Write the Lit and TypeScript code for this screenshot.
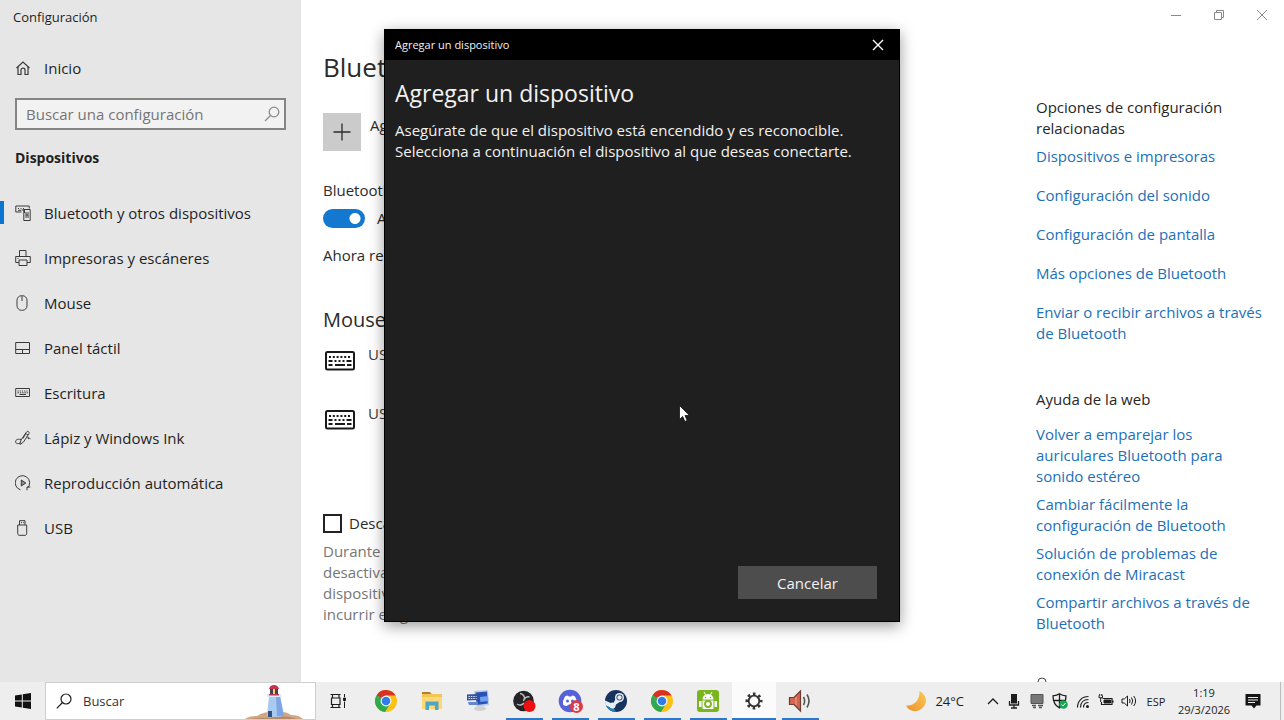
import { LitElement, html, css, svg, nothing } from "lit";
import { customElement } from "lit/decorators.js";
import { classMap } from "lit/directives/class-map.js";

const icon = (size: number, box: string, body: unknown) => html`<svg
  width=${size} height=${size} viewBox=${box} fill="none" stroke="currentColor" aria-hidden="true">${body}</svg>`;

const chrome = svg`<g stroke="none">
  <circle cx="12" cy="12" r="11" fill="#fbc116"/>
  <path d="M12 12 2.500 6.400A11 11 0 0 1 21.600 6.600H12Z" fill="#d93025"/>
  <path d="M2.500 6.400A11 11 0 0 0 11 23l5.300-8.600L12 12 7.500 14.700Z" fill="#2da94f"/>
  <path d="M2.500 6.400 7.300 14.600 9 9Z" fill="#2da94f"/>
  <circle cx="12" cy="12" r="5.400" fill="#fff"/><circle cx="12" cy="12" r="4.300" fill="#2f7de9"/></g>`;

const nav: { label: string; art: unknown; current?: boolean }[] = [
  {
    label: "Bluetooth y otros dispositivos", current: true,
    art: svg`<path d="M6.500 7H.8V1h13.400v2.500M3 3.500h1M5.500 3.500h1M8 3.500h1M3 5.300h3"/><path d="M6.500 5h3v3M8.800 4.500h6.400v11H8.800zM11 7v6M13 7v6M11 10h2"/>`,
  },
  {
    label: "Impresoras y escáneres",
    art: svg`<path d="M4.500 6.500v-6H11v6M4 12.500H.700v-6h14.600v6H12M4 10h8v5.500H4zM2.500 8.500h1"/>`,
  },
  { label: "Mouse", art: svg`<rect x="2" y=".7" width="10" height="14.600" rx="4.500"/><path d="M7 1v5"/>` },
  { label: "Panel táctil", art: svg`<path d="M.7 2.500h13.800v11H.7zM.7 9.500h13.800M7.500 9.500v4"/>` },
  {
    label: "Escritura",
    art: svg`<path d="M.7 3.500h13.800v8H.7z"/><path d="M2.500 6h10.500" stroke-dasharray="1.200 1"/><path d="M2.500 7.800h10.500" stroke-dasharray="1.500 .8"/><path d="M4.500 9.500h6.500"/>`,
  },
  {
    label: "Lápiz y Windows Ink",
    art: svg`<path d="M5 13.500 6 10l5.500-8c1-1.500 3.300-.2 2.500 1.500L8.500 12 5 14.500zM10.500 3.500l2.500 1.500M8 8.500 10.500 4M6 9.500c-4-1-6 1-5.300 2.800C1.300 14 3.500 14 5 13M11.500 7.500c2-1.200 3 .2 1.500 1.300 1-.5 2-.5 2.500 0"/>`,
  },
  {
    label: "Reproducción automática",
    art: svg`<path d="M5.500 14.800A7.200 7.200 0 1 1 12.500 13M15.300 12h-3.300v3.300"/><path d="M6.300 5v6l4.500-3z" fill="currentColor" fill-opacity=".5"/>`,
  },
  { label: "USB", art: svg`<path d="M4.500 5V.7h5.500V5M2.700 5h9v8.500c0 1-.5 1.800-1.500 1.800h-6c-1 0-1.500-.8-1.500-1.800zM6 2.700h1M8.200 2.700h1"/>` },
];

const related = [
  "Dispositivos e impresoras",
  "Configuración del sonido",
  "Configuración de pantalla",
  "Más opciones de Bluetooth",
  "Enviar o recibir archivos a través de Bluetooth",
];
const webHelp = [
  "Volver a emparejar los auriculares Bluetooth para sonido estéreo",
  "Cambiar fácilmente la configuración de Bluetooth",
  "Solución de problemas de conexión de Miracast",
  "Compartir archivos a través de Bluetooth",
];

@customElement("settings-sidebar")
export class SettingsSidebar extends LitElement {
  static styles = css`
    :host { display: block; background: #e6e6e6; color: #1f1f1f; }
    .title { font-size: 13px; line-height: 35px; padding-left: 13px; }
    a { color: inherit; text-decoration: none; display: flex; align-items: center; height: 45px; gap: 13px; padding-left: 15px; }
    .home { margin-top: 10px; }
    .search { display: flex; align-items: center; box-sizing: border-box; height: 32px; margin: 8px 15px 0; border: 2px solid #858585; background: #f2f2f2; padding: 0 4px 0 9px; color: #8a8a8a; }
    input { flex: 1; min-width: 0; border: 0; padding: 0; background: none; outline: 0; font: inherit; color: #333; }
    input::placeholder { color: #757575; opacity: 1; }
    h2 { margin: 18px 0 22px 15px; font-size: 14px; line-height: 20px; font-weight: 700; }
    .current { background: linear-gradient(#0b74d1, #0b74d1) 0 50% / 4px 23px no-repeat; }
    svg { flex: none; }
    a svg { color: #3a3a3a; }
  `;
  render() {
    return html`
      <div class="title">Configuración</div>
      <a class="home" href="#inicio">${icon(16, "0 0 16 16", svg`<path d="M1.500 8 8 2l6.500 6M3 7v7.500h3V10c0-2.500 4-2.500 4 0v4.500h3V7" stroke-width="1.200"/>`)}<span>Inicio</span></a>
      <label class="search">
        <input type="search" placeholder="Buscar una configuración" aria-label="Buscar una configuración" />
        ${icon(16, "0 0 16 16", svg`<circle cx="10" cy="6" r="4.800" stroke-width="1.300"/><path d="M6.500 9.500 1 15" stroke-width="1.300"/>`)}
      </label>
      <h2>Dispositivos</h2>
      <nav>${nav.map((n) => html`<a href="#" class=${classMap({ current: !!n.current })} aria-current=${n.current ? "page" : nothing}>${icon(16, "0 0 16 16", n.art)}<span>${n.label}</span></a>`)}</nav>
    `;
  }
}

@customElement("bluetooth-page")
export class BluetoothPage extends LitElement {
  static styles = css`
    :host { display: flex; flex-direction: column; background: #fff; color: #2b2b2b; min-width: 0; }
    .controls { display: flex; justify-content: flex-end; padding-right: 1px; }
    .controls button { width: 43px; height: 30px; border: 0; padding: 0; background: none; color: #8a8a8a; display: grid; place-items: center; }
    .columns { display: flex; justify-content: space-between; padding: 0 18px 0 22px; }
    .main { flex: 1; max-width: 580px; padding-top: 19px; }
    h1 { margin: 0; font-size: 26px; line-height: 36px; font-weight: 400; }
    .add { display: flex; align-items: flex-start; gap: 9px; margin-top: 28px; border: 0; padding: 0; background: none; font: inherit; color: inherit; line-height: 24px; }
    .tile { width: 38px; height: 38px; background: #cbcbcb; display: grid; place-items: center; }
    .label { margin: 29px 0 0; line-height: 20px; }
    .toggle { display: flex; align-items: center; gap: 12px; margin-top: 8px; line-height: 20px; }
    .toggle input { appearance: none; box-sizing: border-box; margin: 0; width: 42px; height: 19px; border-radius: 10px; background: radial-gradient(circle at 32px 50%, #fff 5px, transparent 6px) #1478d0; }
    .seen { margin: 17px 0 0; line-height: 20px; }
    h2 { margin: 41px 0 0; font-size: 20px; line-height: 28px; font-weight: 400; }
    ul { list-style: none; margin: 0; padding: 0; }
    .device { display: flex; gap: 13px; height: 49px; padding: 10px 0 0 2px; line-height: 20px; color: #3a3a3a; }
    .device svg { color: #1a1a1a; margin-top: 2px; }
    .metered { display: flex; align-items: center; gap: 7px; margin-top: 61px; line-height: 20px; }
    .metered input { appearance: none; box-sizing: border-box; margin: 0; width: 19px; height: 19px; border: 2px solid #222; background: #fff; }
    .hint { margin: 8px 0 0; line-height: 21px; color: #767676; }
    .side { width: 230px; padding-top: 67px; line-height: 21px; color: #262626; }
    h3 { margin: 0 0 7px; font-size: inherit; font-weight: 400; line-height: 21px; }
    .side li { margin-bottom: 18px; }
    .side .help li { margin-bottom: 7px; }
    .side .help-title { margin: 45px 0 14px; }
    .side a { color: #1d70b8; text-decoration: none; }
    .more { display: block; margin-top: 43px; height: 20px; color: #444; }
  `;
  private keyboard = html`<svg width="30" height="30" viewBox="0 0 30 30" fill="none" stroke="currentColor" aria-hidden="true"><rect x="1" y="6" width="28" height="17.500" rx="1.500" stroke-width="2"/><path d="M4 11h22.500" stroke-width="2" stroke-dasharray="2 1.800"/><path d="M3.500 15h4M9.500 15h2M13.500 15h2M17.500 15h2M21.500 15h5" stroke-width="2"/><path d="M3.500 19h4M10 19h10M22 19h4.500" stroke-width="2"/></svg>`;
  render() {
    return html`
      <div class="controls">
        <button aria-label="Minimizar">${icon(12, "0 0 12 12", svg`<path d="M1 6.500h10"/>`)}</button>
        <button aria-label="Restaurar">${icon(12, "0 0 12 12", svg`<path d="M1.500 3.500h7v7h-7zM3.500 3.500v-2h7v7h-2"/>`)}</button>
        <button aria-label="Cerrar">${icon(12, "0 0 12 12", svg`<path d="m1 1 10 10M11 1 1 11"/>`)}</button>
      </div>
      <div class="columns">
        <div class="main">
          <h1>Bluetooth y otros dispositivos</h1>
          <button class="add"><span class="tile">${icon(20, "0 0 20 20", svg`<path d="M10 1.500v17M1.500 10h17" stroke-width="1.300"/>`)}</span>Agregar Bluetooth u otro dispositivo</button>
          <p class="label">Bluetooth</p>
          <label class="toggle"><input type="checkbox" role="switch" checked />Activado</label>
          <p class="seen">Ahora reconocible</p>
          <h2>Mouse, teclado y lápiz</h2>
          <ul>
            <li class="device">${this.keyboard}USB Device</li>
            <li class="device">${this.keyboard}USB Device</li>
          </ul>
          <label class="metered"><input type="checkbox" />Descargar con conexiones de uso medido</label>
          <p class="hint">Durante conexiones de uso medido, mantén<br />desactivada esta opción para que los nuevos<br />dispositivos no descarguen software y evitar<br />incurrir en gastos adicionales.</p>
        </div>
        <aside class="side">
          <h3>Opciones de configuración relacionadas</h3>
          <ul>${related.map((t) => html`<li><a href="#">${t}</a></li>`)}</ul>
          <h3 class="help-title">Ayuda de la web</h3>
          <ul class="help">${webHelp.map((t) => html`<li><a href="#">${t}</a></li>`)}</ul>
          <span class="more">${icon(16, "0 0 16 16", svg`<circle cx="6" cy="5" r="4"/>`)}</span>
        </aside>
      </div>
    `;
  }
}

@customElement("add-device-dialog")
export class AddDeviceDialog extends LitElement {
  static styles = css`
    :host { display: flex; flex-direction: column; box-sizing: border-box; border: 1px solid #000; background: #1f1f1f; color: #f2f2f2; box-shadow: 0 4px 14px rgba(0, 0, 0, 0.4); }
    .bar { display: flex; align-items: center; justify-content: space-between; background: #000; height: 30px; padding-left: 10px; font-size: 11px; line-height: 16px; }
    .close { width: 43px; height: 30px; border: 0; padding: 0; background: none; color: #fff; display: grid; place-items: center; }
    .body { flex: 1; padding: 16px 22px 22px 10px; display: flex; flex-direction: column; }
    h1 { margin: 0; font-size: 23px; line-height: 34px; font-weight: 400; }
    p { margin: 10px 0 0; line-height: 21px; }
    .cancel { margin-top: auto; align-self: flex-end; width: 139px; height: 33px; border: 0; background: #4d4d4d; color: #f2f2f2; font: inherit; }
  `;
  render() {
    return html`
      <div class="bar"><span>Agregar un dispositivo</span><button class="close" aria-label="Cerrar">${icon(12, "0 0 12 12", svg`<path d="m1 1 10 10M11 1 1 11" stroke-width="1.400"/>`)}</button></div>
      <div class="body">
        <h1>Agregar un dispositivo</h1>
        <p>Asegúrate de que el dispositivo está encendido y es reconocible. Selecciona a continuación el dispositivo al que deseas conectarte.</p>
        <button class="cancel">Cancelar</button>
      </div>
    `;
  }
}

const apps: { name: string; art: unknown; open?: boolean; active?: boolean; badge?: string }[] = [
  { name: "Google Chrome", art: chrome },
  {
    name: "Explorador de archivos",
    art: svg`<g stroke="none"><path d="M2 3h8l2 2.500H2z" fill="#a98532"/><path d="M2 5h20v15H2z" fill="#fdd878"/><path d="M2 5h20v3H2z" fill="#f3c653"/><path d="M5.500 12.500h13V21H15v-4.500H9V21H5.500z" fill="#4fa6c4"/></g>`,
  },
  {
    name: "Teclado en pantalla",
    art: svg`<g stroke="none"><path d="m8 2 14-1 1 15-12 2z" fill="#bccbe8"/><path d="m9.500 3.500 11.500-1 .8 12-11 1.500z" fill="#2b50b5"/><path d="m14 8 8-1 .3 5-8 1z" fill="#6f9ff0"/><path d="M1 5.500 12 5v6l-11 .5z" fill="#31529c"/><path d="M2.500 7.500h8M2.500 9.500h8" stroke="#e6edfa" stroke-width="1.200" stroke-dasharray="1.400 1"/><path d="M2 13h10v3H3z" fill="#6287cf"/><ellipse cx="14" cy="19.500" rx="6" ry="2.600" fill="#d0d1d2"/></g>`,
  },
  {
    name: "OBS Studio", open: true,
    art: svg`<g stroke="none"><circle cx="11.500" cy="12" r="10.300" fill="#252326"/><path d="M8 4.500a5 5 0 0 1 4.500 6M17.500 8a5 5 0 0 0-6 4M5 15a5 5 0 0 0 7-1" stroke="#bcbcbc" stroke-width="1.500" fill="none"/><circle cx="17.500" cy="17" r="6" fill="#ed1010"/></g>`,
  },
  {
    name: "Discord", open: true, badge: "8",
    art: svg`<g stroke="none"><circle cx="12" cy="12" r="11.300" fill="#5762d8"/><path d="M7 7.500q2-1 3-1l.6 1h2.800l.6-1q1.500 0 3 1 2.500 4 2 8-2 1.500-3.500 1.500l-1-1.800h-3L8.500 17Q7 17 5 15.500q-.5-4 2-8" fill="#fff"/><circle cx="9.500" cy="12" r="1.500" fill="#5762d8"/><circle cx="14.500" cy="12" r="1.500" fill="#5762d8"/></g>`,
  },
  {
    name: "Steam", open: true,
    art: svg`<g stroke="none"><circle cx="12" cy="12" r="11" fill="#17345e"/><path d="M2 16.500Q8 15 12 23A11 11 0 0 1 2 16.500" fill="#2681b2"/><path d="m1 11.500 8 3.500L12 9l5 3-5 3.500-2.500 4-4-1.500-4.300-2z" fill="#e7eef5"/><circle cx="8.500" cy="16.500" r="3" fill="#e7eef5"/><circle cx="15.500" cy="8.500" r="4.500" fill="#e7eef5"/><circle cx="15.500" cy="8.500" r="3" fill="#17345e"/><circle cx="15.500" cy="8.500" r="2.200" fill="#e7eef5"/></g>`,
  },
  { name: "Google Chrome", open: true, art: chrome },
  {
    name: "Android", open: true,
    art: svg`<g stroke="none"><rect x="1" y="1" width="22" height="22" rx="3" fill="#79b51c"/><path d="M6.500 10.500a5.500 5.500 0 0 1 11 0zM6.500 11.500h11V20h-11zM3 12h2.500v6H3zM18.500 12H21v6h-2.500z" fill="#fff"/><path d="m8 3 1.700 3M16 3l-1.700 3" stroke="#fff"/><circle cx="9.500" cy="8.500" r=".8" fill="#79b51c"/><circle cx="14.500" cy="8.500" r=".8" fill="#79b51c"/><circle cx="12" cy="15" r="3" stroke="#79b51c" stroke-width="1.800" fill="none"/></g>`,
  },
  {
    name: "Configuración", open: true, active: true,
    art: svg`<circle cx="12" cy="12" r="5.300" stroke="#333" stroke-width="1.800"/><circle cx="12" cy="12" r="7.200" stroke="#333" stroke-width="2.600" stroke-dasharray="2.600 3.055" stroke-dashoffset="1.300"/>`,
  },
  {
    name: "Sonido", open: true,
    art: svg`<g><path d="M1.500 8.500H6L12.500 2v20L6 15.500H1.500z" fill="#d2664f" stroke="#6f3a32" stroke-width="1.200"/><path d="M8 8v8" stroke="#f0a892"/><path d="M15.500 8q2.200 4 0 8M19 5.500q4 6.500 0 13" stroke="#555" stroke-width="1.600"/></g>`,
  },
];

const tray = [
  { name: "Micrófono", art: svg`<rect x="5" y="1" width="6" height="9.500" fill="currentColor" stroke="none"/><path d="M3.500 8v4h9V8M8 12v3M5 15h6" stroke-width="1.300"/>` },
  { name: "Pantalla", art: svg`<path d="M2 1.500h12v9H2z" fill="#777" stroke="#555"/><path d="M3 12.500h4M9 12.500h5M4 14.500h3M10 14.500h3" stroke="#555" stroke-width="1.500"/>` },
  { name: "Seguridad", art: svg`<path d="M7.500.8C5.500 2.200 3.500 2.700 1 2.800c0 6 1.500 9.700 6.500 12.200 5-2.500 6.500-6.200 6.500-12.200-2.500 0-4.500-.6-6.500-2zM7.500 1v14M1.300 7.500H14" stroke-width="1.300"/><circle cx="11.500" cy="11.500" r="4.300" fill="#18a558" stroke="none"/><path d="m9.500 11.500 1.500 1.500 2.600-3" stroke="#fff"/>` },
  { name: "Wi-Fi", art: svg`<path d="M2.500 14.500C2.500 8 7 3.500 13.500 3.500M5.500 14.500c0-5 3-8 8-8M8.500 14.500c0-3 2-5 5-5" stroke-width="1.200"/><circle cx="12.500" cy="13.500" r="1.500" fill="currentColor" stroke="none"/>` },
  { name: "Batería", art: svg`<path d="M4.500 5.500H14v6H3.500V9M15 7.500v2" stroke-width="1.200"/><path d="M6 7h6.500v3H6z" fill="currentColor"/><path d="M1 2.500v2.200h3.500V2.500M2.700 5v4M1.700 1v2M3.800 1v2"/>` },
  { name: "Volumen", art: svg`<path d="M1 6h2.300L6.500 3v10L3.300 10H1zM8.500 6q1.200 2 0 4M10.500 4.500q2.500 3.500 0 7M12.700 3q3.800 5 0 10"/>` },
];

@customElement("task-bar")
export class TaskBar extends LitElement {
  static styles = css`
    :host { display: flex; height: 38px; background: #eeeeee; color: #1d1d1d; }
    button { border: 0; padding: 0; margin: 0; background: none; color: inherit; font: inherit; display: grid; place-items: center; }
    .start { width: 45px; }
    .search { display: flex; align-items: center; box-sizing: border-box; width: 271px; border: 1px solid #cfcfcf; background: #fff; padding-left: 10px; gap: 11px; font-size: 13px; }
    .search input { flex: 1; min-width: 0; border: 0; padding: 0; background: none; outline: 0; font: inherit; color: inherit; }
    .search input::placeholder { color: #333; opacity: 1; }
    .art { align-self: flex-end; margin-right: 2px; }
    .view { width: 44px; }
    .apps { display: flex; margin-left: 3px; }
    .app { position: relative; width: 46px; }
    .open { background: linear-gradient(#2f78c9, #2f78c9) 50% 100% / 37px 2px no-repeat; }
    .active { background: linear-gradient(#2f78c9, #2f78c9) 50% 100% / 44px 2px no-repeat, linear-gradient(#fbfbfb, #fbfbfb) 50% 0 / 44px 100% no-repeat; }
    .badge { position: absolute; left: 23px; top: 18px; width: 13px; height: 13px; border-radius: 50%; background: #d83c4c; color: #fff; font-size: 11px; line-height: 13px; font-weight: 700; }
    .tray { display: flex; margin-left: auto; }
    .weather { display: flex; align-items: center; gap: 8px; margin-right: 20px; font-size: 13px; }
    .chevron { width: 18px; }
    .icon { width: 23px; }
    .lang { width: 32px; font-size: 11px; }
    .clock { width: 64px; font-size: 11px; line-height: 17px; text-align: center; padding-top: 2px; }
    .notes { width: 33px; margin-right: 11px; }
    .desktop { width: 4px; border-left: 1px solid #bdbdbd; }
  `;
  render() {
    return html`
      <button class="start" aria-label="Inicio">${icon(16, "0 0 16 16", svg`<path d="M0 2.500 6.800 1.500v6H0zM7.800 1.300 16 0v7.500H7.800zM0 8.500h6.800v6L0 13.500zM7.800 8.500H16V16l-8.200-1.300z" fill="#111" stroke="none"/>`)}</button>
      <label class="search">
        ${icon(16, "0 0 16 16", svg`<circle cx="10" cy="6" r="5" stroke-width="1.200"/><path d="M6.500 9.500.8 15.300" stroke-width="1.200"/>`)}
        <input placeholder="Buscar" aria-label="Buscar" />
        <svg class="art" width="68" height="36" viewBox="0 0 68 36" aria-hidden="true">
          <path d="M0 36q4-3 12-3 8-5 20-4 8-1 14 3 8 0 12 4z" fill="#d0a684"/><path d="M6 36q10-2 18-1 14-4 28 1z" fill="#b58a6c"/>
          <path d="M24 13h11l4 20q-9 2-17 0z" fill="#a9cbf2"/><path d="M31 13h4l4 20h-7z" fill="#7ea5e4"/><path d="M23 28h4v6h-4z" fill="#30517f"/>
          <path d="M22 11h14v3H22z" fill="#dbe9f7"/><path d="M25 6h8v5h-8z" fill="#46454f"/><path d="M28 6h2v5h-2z" fill="#f2cf77"/><path d="M24 6q1-4 5-4t5 4z" fill="#c9304a"/><path d="M24 11h10v1.500H24z" fill="#b83a52"/>
        </svg>
      </label>
      <button class="view" aria-label="Vista de tareas">${icon(16, "0 0 16 16", svg`<path d="M.5 1.500h10M.5 14.500h10M2.500 1.500v3.500M9 1.500v3.500M2.500 14.500v-3M9 14.500v-3M1.500 5h8.500v6.500H1.500z" stroke-width="1.200"/><path d="M14.500 1v3M14.500 8.500v6.500" /><path d="M13.500 5h2v2.500h-2z" fill="currentColor"/>`)}</button>
      <div class="apps">${apps.map((a) => html`<button class=${classMap({ app: true, open: !!a.open, active: !!a.active })} aria-label=${a.name}>${icon(24, "0 0 24 24", a.art)}${a.badge ? html`<span class="badge">${a.badge}</span>` : nothing}</button>`)}</div>
      <div class="tray">
        <button class="weather"><svg width="22" height="22" viewBox="0 0 22 22" aria-hidden="true"><defs><linearGradient id="moon" x1="1" y1="0" x2="0" y2="1"><stop stop-color="#fbca55"/><stop offset="1" stop-color="#ec902c"/></linearGradient></defs><path d="M14.500 1C20 4 23 10 19.500 15.500 15 23 4.500 23 1 15.500 9 16.500 15 10 14.500 1" fill="url(#moon)"/></svg>24°C</button>
        <button class="chevron" aria-label="Mostrar iconos ocultos">${icon(12, "0 0 12 12", svg`<path d="m1 9 5-5 5 5" stroke-width="1.300"/>`)}</button>
        ${tray.map((t) => html`<button class="icon" aria-label=${t.name}>${icon(16, "0 0 16 16", t.art)}</button>`)}
        <button class="lang">ESP</button>
        <div class="clock">1:19<br />29/3/2026</div>
        <button class="notes" aria-label="Notificaciones">${icon(16, "0 0 16 16", svg`<path d="M.5 1h15v11.500h-4L9 15.500 6.500 12.500h-6z" fill="#151515" stroke="none"/><path d="M3 4.500h10M3 7h10M3 9.500h7" stroke="#eee"/>`)}</button>
        <button class="desktop" aria-label="Mostrar escritorio"></button>
      </div>
    `;
  }
}

@customElement("app-root")
export class AppRoot extends LitElement {
  static styles = css`
    :host { display: flex; flex-direction: column; position: relative; height: 100vh; overflow: hidden; font-family: "Open Sans", "Noto Sans", sans-serif; font-size: 15px; }
    .window { flex: 1; min-height: 0; display: grid; grid-template-columns: 301px minmax(0, 1fr); overflow: hidden; }
    .layer { position: absolute; inset: 0 0 98px; display: flex; justify-content: center; padding-top: 29px; pointer-events: none; }
    add-device-dialog { width: 516px; pointer-events: auto; }
    .pointer { position: absolute; left: 678px; top: 404px; pointer-events: none; }
  `;
  render() {
    return html`
      <div class="window"><settings-sidebar></settings-sidebar><bluetooth-page></bluetooth-page></div>
      <task-bar></task-bar>
      <div class="layer"><add-device-dialog role="dialog" aria-label="Agregar un dispositivo"></add-device-dialog></div>
      <svg class="pointer" width="14" height="20" viewBox="0 0 14 20" aria-hidden="true"><path d="M1.500 1.500v14l3.200-3 2.200 5 2.300-1-2.200-5h4.500z" fill="#fff" stroke="#111" stroke-width=".8"/></svg>
    `;
  }
}
